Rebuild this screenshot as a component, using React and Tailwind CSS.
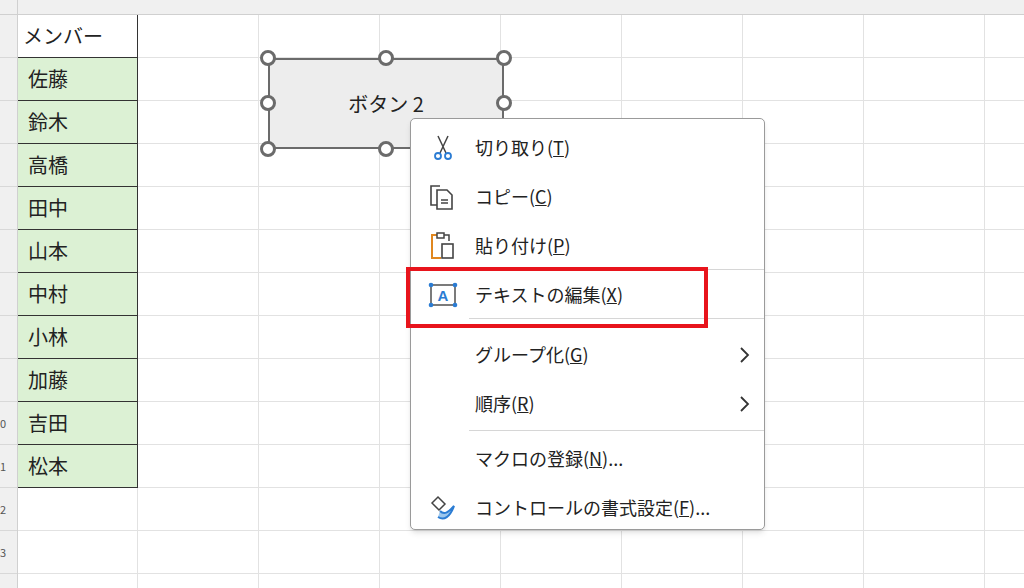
import React from "react";

const names = ["佐藤","鈴木","高橋","田中","山本","中村","小林","加藤","吉田","松本"];
const font = { fontFamily: '"Noto Sans CJK JP","Liberation Sans",sans-serif' };

function Handle({ x, y }) {
  return <div className="absolute w-[16px] h-[16px] rounded-full bg-white border-[3px] border-[#6b6b6b]" style={{ left: x - 8, top: y - 8 }} />;
}

function Item({ icon, label, u, rest, arrow, sep }) {
  return (
    <div className="relative flex items-center h-[49px]">
      <div className="w-[64px] flex justify-center">{icon}</div>
      <div className="text-[18px] text-[#222]">{label}(<span className="underline">{u}</span>){rest}</div>
      {arrow && (
        <svg className="ml-auto mr-[14px]" width="12" height="18" viewBox="0 0 12 18" fill="none"><path d="M3 2 L10 9 L3 16" stroke="#333" strokeWidth="1.8"/></svg>
      )}
      {sep && <div className="absolute left-[58px] right-0 bottom-0 h-px bg-[#d6d6d6]" />}
    </div>
  );
}

export default function App() {
  const rows = Array.from({ length: 14 });
  return (
    <div className="relative w-[1024px] h-[588px] overflow-hidden bg-white" style={font}>
      <div className="h-[15px] bg-[#f0f0f0] border-b border-[#d0d0d0] flex">
        <div className="w-[18px] shrink-0 border-r border-[#d0d0d0]" />
      </div>
      <div className="flex">
        <div className="w-[18px] shrink-0 bg-[#f0f0f0] border-r border-[#d0d0d0] flex flex-col text-[11px] text-[#555]">
          {rows.map((_, i) => (
            <div key={i} className="h-[43px] border-b border-[#d8d8d8] flex items-center">{i >= 9 && i <= 12 ? ["0","1","2","3"][i - 9] : ""}</div>
          ))}
        </div>
        <div className="flex-1 flex flex-col">
          {rows.map((_, i) => (
            <div key={i} className="h-[43px] flex">
              <div className={`w-[120px] shrink-0 h-[43px] flex items-center text-[20px] text-[#222] ${i === 0 ? "bg-white pl-[5px] border-r border-b border-[#333]" : i <= 10 ? "bg-[#dcf1d4] pl-[10px] border-r border-b border-[#333]" : "border-r border-b border-[#e2e2e2]"}`}>
                {i === 0 ? "メンバー" : names[i - 1] || ""}
              </div>
              {[0,1,2,3,4,5,6,7].map((j) => (
                <div key={j} className="w-[121px] shrink-0 border-r border-b border-[#e2e2e2]" />
              ))}
            </div>
          ))}
        </div>
      </div>

      <div className="absolute left-[268px] top-[58px] w-[236px] h-[91px] bg-[#ededed] border-2 border-[#6b6b6b] flex items-center justify-center text-[20px] text-[#222]">ボタン 2</div>
      <Handle x={268} y={58} /><Handle x={386} y={58} /><Handle x={504} y={58} />
      <Handle x={268} y={103} /><Handle x={504} y={103} />
      <Handle x={268} y={149} /><Handle x={386} y={149} />

      <div className="absolute left-[410px] top-[118px] w-[355px] h-[412px] bg-white border border-[#9a9a9a] rounded-[5px] shadow-md pt-[4px]">
        <Item label="切り取り" u="T" icon={
          <svg width="24" height="28" viewBox="0 0 24 28" fill="none"><path d="M7 2 L15 19 M17 2 L9 19" stroke="#444" strokeWidth="1.5"/><circle cx="7" cy="22" r="3" stroke="#2b7cd3" strokeWidth="1.8"/><circle cx="17" cy="22" r="3" stroke="#2b7cd3" strokeWidth="1.8"/></svg>} />
        <Item label="コピー" u="C" icon={
          <svg width="30" height="28" viewBox="0 0 30 28" fill="none"><path d="M9 22H3V3h9" stroke="#444" strokeWidth="1.6"/><path d="M9 7h10l5 5v14H9z" stroke="#444" strokeWidth="1.6"/><path d="M13 17h7M13 20h7" stroke="#444" strokeWidth="1.3"/></svg>} />
        <Item label="貼り付け" u="P" sep icon={
          <svg width="28" height="30" viewBox="0 0 28 30" fill="none"><path d="M8 4H3v23h9" stroke="#e0871f" strokeWidth="2"/><path d="M8 2h7v5H8z" stroke="#444" strokeWidth="1.5"/><path d="M15 4h5v6" stroke="#444" strokeWidth="1.5"/><rect x="13" y="13" width="11" height="14" stroke="#444" strokeWidth="1.6"/></svg>} />
        <div className="h-[60px]"><Item label="テキストの編集" u="X" sep icon={
          <svg width="30" height="26" viewBox="0 0 30 26" fill="none"><rect x="3" y="3" width="24" height="20" stroke="#444" strokeWidth="1.4"/><text x="15" y="19" textAnchor="middle" fontSize="15" fontWeight="bold" fill="#2b7cd3" fontFamily="Liberation Sans">A</text>{[[3,3],[27,3],[3,23],[27,23]].map(([x,y],k)=><circle key={k} cx={x} cy={y} r="2.3" fill="#2b7cd3"/>)}</svg>} /></div>
        <Item label="グループ化" u="G" arrow />
        <Item label="順序" u="R" arrow />
        <div className="h-[6px] relative"><div className="absolute left-[58px] right-0 top-[2px] h-px bg-[#d6d6d6]" /></div>
        <Item label="マクロの登録" u="N" rest="..." />
        <Item label="コントロールの書式設定" u="F" rest="..." icon={
          <svg width="30" height="30" viewBox="0 0 30 30" fill="none"><path d="M4 10 L10 4 L17 11 L11 17z" stroke="#444" strokeWidth="1.5"/><path d="M12 18 C16 22 20 20 26 13 C22 24 16 28 10 24" stroke="#2b7cd3" strokeWidth="2" fill="#9cc7ee"/></svg>} />
      </div>

      <div className="absolute left-[406px] top-[267px] w-[302px] h-[61px] border-[4px] border-[#e8141c]" />
    </div>
  );
}
